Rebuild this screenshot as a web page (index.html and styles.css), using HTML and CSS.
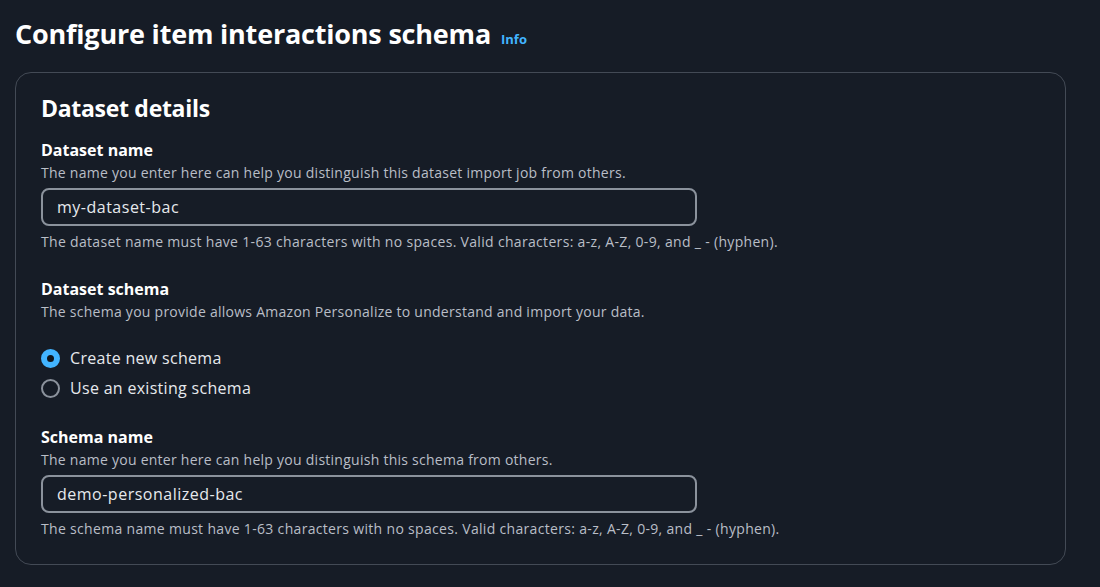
FILE: index.html
```html
<!DOCTYPE html>
<html lang="en">
<head>
<meta charset="utf-8">
<title>Configure item interactions schema</title>
<link rel="stylesheet" href="styles.css">
</head>
<body>
<main class="page">
  <header class="page-header">
    <h1 class="page-title">Configure item interactions schema</h1>
    <a class="info-link" href="#">Info</a>
  </header>
  <section class="container">
    <h2 class="container-title">Dataset details</h2>

    <div class="field">
      <div class="label">Dataset name</div>
      <div class="desc">The name you enter here can help you distinguish this dataset import job from others.</div>
      <div class="input">my-dataset-bac</div>
      <div class="constraint">The dataset name must have 1-63 characters with no spaces. Valid characters: a-z, A-Z, 0-9, and _ - (hyphen).</div>
    </div>

    <div class="field field-schema">
      <div class="label">Dataset schema</div>
      <div class="desc">The schema you provide allows Amazon Personalize to understand and import your data.</div>
      <div class="radios">
        <div class="radio"><span class="radio-dot checked"></span><span class="radio-label">Create new schema</span></div>
        <div class="radio"><span class="radio-dot"></span><span class="radio-label">Use an existing schema</span></div>
      </div>
    </div>

    <div class="field field-last">
      <div class="label">Schema name</div>
      <div class="desc">The name you enter here can help you distinguish this schema from others.</div>
      <div class="input">demo-personalized-bac</div>
      <div class="constraint">The schema name must have 1-63 characters with no spaces. Valid characters: a-z, A-Z, 0-9, and _ - (hyphen).</div>
    </div>
  </section>
</main>
</body>
</html>
```
FILE: styles.css
```css
html, body {
  margin: 0;
  padding: 0;
  background: #161c26;
}
body {
  font-family: "Open Sans", "Noto Sans", sans-serif;
  color: #dfe3e8;
}
.page {
  padding: 14px 34px 0 15px;
}
.page-header {
  display: flex;
  align-items: baseline;
  gap: 10px;
  height: 44px;
}
.page-title {
  margin: 0;
  font-size: 27px;
  font-weight: 700;
  color: #ffffff;
  letter-spacing: -0.2px;
  line-height: 40px;
}
.info-link {
  color: #42b4ff;
  font-size: 13px;
  font-weight: 700;
  text-decoration: none;
}
.container {
  margin-top: 14px;
  width: 1051px;
  box-sizing: border-box;
  border: 1px solid #434a55;
  border-radius: 16px;
  padding: 18px 25px 25px 25px;
}
.container-title {
  margin: 0 0 15px 0;
  font-size: 23px;
  font-weight: 700;
  color: #ffffff;
  line-height: 34px;
  letter-spacing: -0.3px;
}
.label {
  font-size: 16px;
  font-weight: 700;
  color: #ffffff;
  line-height: 20px;
}
.desc {
  font-size: 14px;
  letter-spacing: 0.26px;
  color: #b9bec7;
  line-height: 20px;
  margin-top: 3px;
}
.input {
  margin-top: 5px;
  width: 656px;
  height: 38px;
  box-sizing: border-box;
  border: 2px solid #8b929c;
  border-radius: 8px;
  padding: 0 14px;
  display: flex;
  align-items: center;
  font-size: 16px;
  letter-spacing: 0.5px;
  color: #e6e9ed;
}
.constraint {
  margin-top: 6px;
  font-size: 14px;
  letter-spacing: 0.32px;
  color: #b9bec7;
  line-height: 20px;
}
.field-schema {
  margin-top: 27px;
}
.radios {
  margin-top: 24px;
  display: flex;
  flex-direction: column;
  gap: 6px;
}
.radio {
  display: flex;
  align-items: center;
  gap: 10px;
  height: 24px;
}
.radio-dot {
  width: 19px;
  height: 19px;
  box-sizing: border-box;
  border-radius: 50%;
  border: 2px solid #8b929c;
  display: inline-block;
}
.radio-dot.checked {
  border: 6px solid #42b4ff;
  background: #0f141a;
}
.radio-label {
  font-size: 16px;
  letter-spacing: 0.3px;
  color: #e6e9ed;
}
.field-last {
  margin-top: 27px;
}
```
